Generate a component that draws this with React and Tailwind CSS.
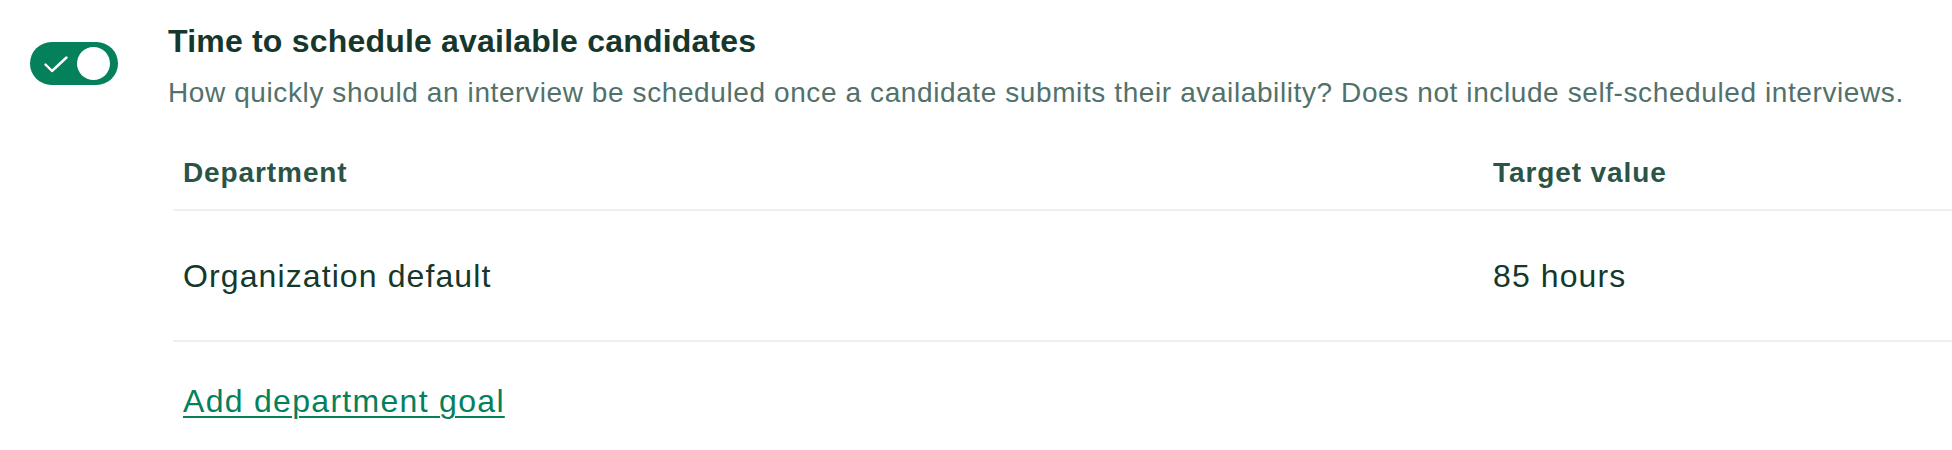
import React, { useState } from 'react';

const font = { fontFamily: '"Liberation Sans", Arial, sans-serif' };

const Toggle = ({ on, onChange }) => (
  <button
    type="button"
    onClick={() => onChange(!on)}
    className={`relative flex h-[43px] w-[88px] shrink-0 items-center rounded-full ${on ? 'bg-[#04805b]' : 'bg-[#c9d2cf]'}`}
  >
    {on && (
      <svg width="24" height="17" viewBox="0 0 24 17" className="absolute left-[14px] top-[14px]">
        <polyline points="1.5,8.5 8,15 22.5,1.5" fill="none" stroke="white" strokeWidth="2.4" strokeLinecap="round" strokeLinejoin="round" />
      </svg>
    )}
    <span className={`absolute top-[5px] h-[33px] w-[33px] rounded-full bg-white ${on ? 'left-[47px]' : 'left-[6px]'}`} />
  </button>
);

export default function App() {
  const [enabled, setEnabled] = useState(true);

  const goals = [{ department: 'Organization default', target: '85 hours' }];

  return (
    <div className="h-[450px] w-full bg-white" style={font}>
      <div className="flex pl-[30px]">
        <div className="pt-[42px]">
          <Toggle on={enabled} onChange={setEnabled} />
        </div>

        <div className="ml-[50px] flex-1 pt-[21px]">
          {/* HEADING */}
          <h3 className="text-[32px] font-bold leading-[40px] tracking-[0.2px] text-[#15372c]">
            Time to schedule available candidates
          </h3>
          <p className="mt-[12px] text-[28px] leading-[40px] tracking-[0.6px] text-[#52716a]">
            How quickly should an interview be scheduled once a candidate submits their availability? Does not include self-scheduled interviews.
          </p>

          {/* GOALS TABLE */}
          <div className="ml-[5px] mt-[40px]">
            <div className="grid grid-cols-[1310px_1fr] border-b-2 border-[#efefef] pb-[16px] text-[28px] font-bold leading-[40px] tracking-[0.9px] text-[#2b5446]">
              <div className="pl-[10px]">Department</div>
              <div className="pl-[10px]">Target value</div>
            </div>
            {goals.map((g) => (
              <div
                key={g.department}
                className="grid grid-cols-[1310px_1fr] border-b-2 border-[#efefef] pb-[44px] pt-[45px] text-[32px] leading-[40px] tracking-[1.1px] text-[#15372c]"
              >
                <div className="pl-[10px]">{g.department}</div>
                <div className="pl-[10px]">{g.target}</div>
              </div>
            ))}
            <div className="pl-[10px] pt-[39px]">
              <a href="#" className="text-[32px] leading-[40px] tracking-[1.3px] text-[#04805b] underline decoration-2 underline-offset-[4px]">
                Add department goal
              </a>
            </div>
          </div>
        </div>
      </div>
    </div>
  );
}
